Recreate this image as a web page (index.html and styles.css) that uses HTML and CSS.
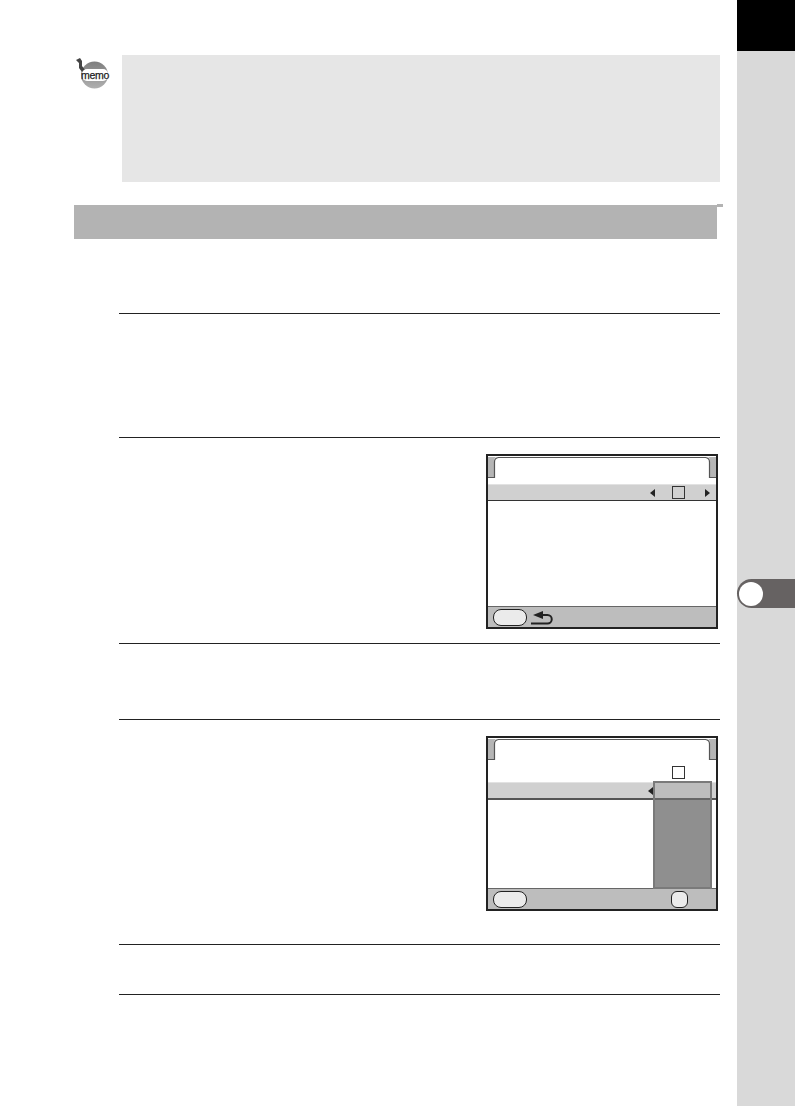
FILE: index.html
```html
<html>
	<head>
		<title>Manual page</title>
		<link rel="stylesheet" href="styles.css">
	</head>
	<body>
		<div class="page">
			<div class="main">
				<div class="memo">
					<svg class="memo-icon" width="36" height="36" viewBox="0 0 36 36">
						<defs>
							<linearGradient id="ball" x1="0" y1="0" x2="0" y2="1">
								<stop offset="0" stop-color="#7e7e7e"/>
								<stop offset="1" stop-color="#b0b0b0"/>
							</linearGradient>
						</defs>
						<circle cx="20.5" cy="19" r="13.5" fill="url(#ball)"/>
						<path d="M2 4 L6 2 L8 5 L8 10 L11 14 L8 16 L5 12 L5 7 Z" fill="#444"/>
						<rect x="8" y="13" width="26" height="12" rx="5" fill="#fff"/>
						<text x="21" y="22.5" class="memo-word" text-anchor="middle">memo</text>
					</svg>
					<div class="memo-box"></div>
				</div>

				<div class="heading"><div class="heading-bar"></div><div class="heading-tick"></div></div>

				<div class="steps">
					<div class="step step-1"></div>

					<div class="step step-2">
						<div class="screen">
							<svg class="screen-top" width="228" height="28" viewBox="0 0 228 28">
								<path d="M0 1H8Q6 2 6 5V21H0Z M228 1H220Q222 2 222 5V21H228Z" fill="#b5b5b5"/>
								<path d="M0 21.5H6.5V6Q6.5 2 10.5 1.5H217.5Q221.5 2 221.5 6V21.5H228" fill="none" stroke="#555" stroke-width="1.2"/>
							</svg>
							<div class="option">
								<span class="arrow-left"></span>
								<span class="check"></span>
								<span class="arrow-right"></span>
							</div>
							<div class="screen-body"></div>
							<div class="screen-foot">
								<span class="pill"></span>
								<svg class="back" width="23" height="15" viewBox="0 0 23 15">
									<path d="M1 13.5H17.5A4.25 4.25 0 0 0 17.5 5H10" fill="none" stroke="#222" stroke-width="2"/>
									<polygon points="3,5 13,1 13,9" fill="#222"/>
								</svg>
							</div>
						</div>
					</div>

					<div class="step step-3"></div>

					<div class="step step-4">
						<div class="screen">
							<svg class="screen-top" width="228" height="28" viewBox="0 0 228 28">
								<path d="M0 1H8Q6 2 6 5V21H0Z M228 1H220Q222 2 222 5V21H228Z" fill="#b5b5b5"/>
								<path d="M0 21.5H6.5V6Q6.5 2 10.5 1.5H217.5Q221.5 2 221.5 6V21.5H228" fill="none" stroke="#555" stroke-width="1.2"/>
							</svg>
							<div class="check-row"><span class="check"></span></div>
							<div class="option option-open">
								<span class="arrow-left"></span>
							</div>
							<div class="screen-body"></div>
							<div class="screen-foot foot-split">
								<span class="pill"></span>
								<span class="pill pill-small"></span>
							</div>
							<div class="dropdown"><div class="dropdown-top"></div></div>
						</div>
					</div>

					<div class="step step-5"></div>
				</div>
			</div>

			<div class="side">
				<div class="side-black"></div>
				<div class="side-tab"><span class="side-dot"></span></div>
			</div>
		</div>
	</body>
</html>
```

FILE: styles.css
```css
html, body {
	margin: 0;
	padding: 0;
	background-color: #fff;
	font-family: "Liberation Sans", Arial, sans-serif;
}

.page {
	display: flex;
	width: 795px;
	height: 1106px;
	overflow: hidden;
}

.main {
	width: 737px;
	box-sizing: border-box;
	padding: 55px 0px 0px 74px;
}

/* memo block */
.memo {
	display: flex;
	align-items: flex-start;
	width: 646px;
	height: 127px;
}

.memo-icon {
	width: 36px;
	height: 36px;
	margin: 1px 12px 0px 0px;
}

.memo-word {
	font-family: "Liberation Sans", Arial, sans-serif;
	font-size: 10.5px;
	fill: #222;
	stroke: #222;
	stroke-width: .25px;
	letter-spacing: -.3px;
}

.memo-box {
	width: 598px;
	height: 127px;
	background-color: #e6e6e6;
}

/* section heading */
.heading {
	display: flex;
	align-items: flex-start;
	margin-top: 22px;
	height: 35px;
}

.heading-bar {
	width: 643px;
	height: 34px;
	margin-top: 1px;
	background-color: #b3b3b3;
}

.heading-tick {
	width: 6px;
	height: 3px;
	background-color: #b3b3b3;
}

/* steps */
.steps {
	margin: 74px 0px 0px 45px;
	width: 601px;
}

.step {
	box-sizing: border-box;
	border-top: solid 1px #222;
	display: flex;
	justify-content: flex-end;
	padding: 16px 2px 0px 0px;
}

.step-1 { height: 124px; }
.step-2 { height: 206px; }
.step-3 { height: 76px; }
.step-4 { height: 225px; }

.step-5 {
	height: 51px;
	border-bottom: solid 1px #222;
}

/* camera screens */
.screen {
	position: relative;
	display: flex;
	flex-direction: column;
	box-sizing: border-box;
	width: 232px;
	height: 175px;
	border: solid 2px #222;
	background-color: #fff;
}

.screen-top {
	display: block;
	flex: none;
}

.check-row {
	display: flex;
	justify-content: flex-end;
	height: 16px;
	padding-right: 31px;
}

.option {
	display: flex;
	align-items: center;
	justify-content: flex-end;
	box-sizing: border-box;
	height: 17px;
	padding-right: 6px;
	background-color: #d0d0d0;
	border-top: solid 1px #e2e2e2;
	border-bottom: solid 1px #333;
}

.option-open {
	border-bottom: solid 2px #555;
	height: 18px;
	padding-right: 63px;
}

.check {
	display: block;
	box-sizing: border-box;
	width: 13px;
	height: 13px;
	margin: 0px 20px 0px 17px;
	border: solid 1.5px #333;
	background-color: transparent;
}

.check-row .check {
	margin: 0px;
	background-color: #fff;
}

.arrow-left, .arrow-right {
	display: block;
	width: 0px;
	height: 0px;
	border-top: solid 4.5px transparent;
	border-bottom: solid 4.5px transparent;
}

.arrow-left { border-right: solid 5px #222; }
.arrow-right { border-left: solid 5px #222; }

.screen-body {
	flex: 1;
}

.screen-foot {
	display: flex;
	align-items: center;
	box-sizing: border-box;
	height: 21px;
	padding-left: 5px;
	background-color: #bdbdbd;
	border-top: solid 1px #666;
}

.foot-split {
	justify-content: space-between;
	padding-right: 28px;
}

.pill {
	display: block;
	box-sizing: border-box;
	width: 34px;
	height: 17px;
	border: solid 1px #222;
	border-radius: 8px;
	background-color: #ebebeb;
}

.pill-small {
	width: 17px;
	border-radius: 6px;
}

.back {
	display: block;
	margin-left: 3px;
}

.dropdown {
	position: absolute;
	left: 165px;
	top: 43px;
	box-sizing: border-box;
	width: 59px;
	height: 108px;
	border: solid 2px #7a7a7a;
	background-color: #8f8f8f;
}

.dropdown-top {
	height: 15px;
	background-color: #bdbdbd;
	border-bottom: solid 2px #666;
}

/* side strip */
.side {
	width: 58px;
	background-color: #d9d9d9;
}

.side-black {
	height: 51px;
	background-color: #000;
}

.side-tab {
	display: flex;
	align-items: center;
	height: 29px;
	margin-top: 528px;
	background-color: #666262;
	border-radius: 15px 0px 0px 15px;
	box-sizing: border-box;
	padding-left: 2px;
}

.side-dot {
	display: block;
	width: 24px;
	height: 24px;
	border-radius: 50%;
	background-color: #fff;
}
```
